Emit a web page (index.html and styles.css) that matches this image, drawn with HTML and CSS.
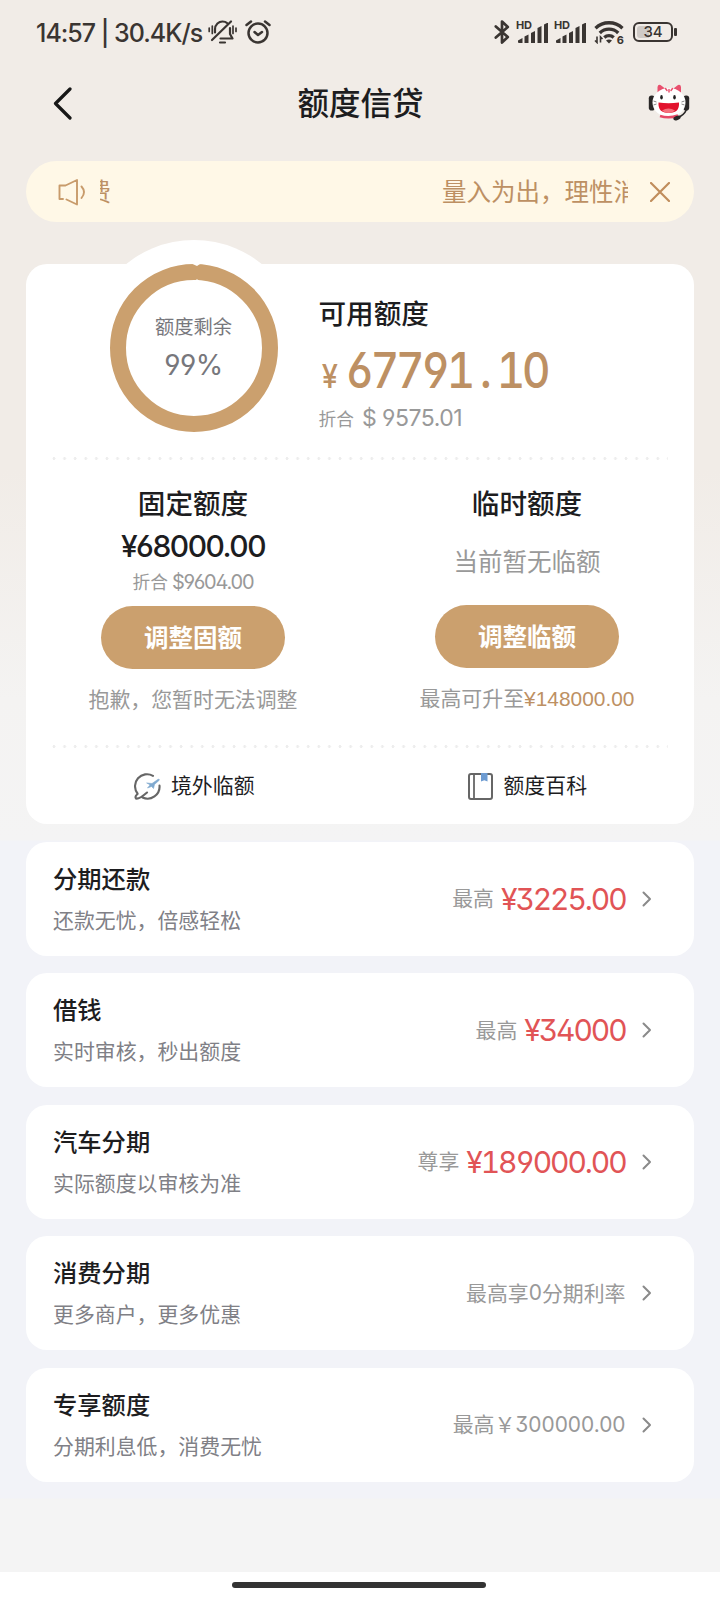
FILE: index.html
```html
<!DOCTYPE html>
<html lang="zh-CN">
<head>
<meta charset="utf-8">
<title>额度信贷</title>
<link rel="stylesheet" href="styles.css">
</head>
<body>
<div class="screen">
  <header class="status">
    <span class="status-time">14:57 | 30.4K/s</span>
    <svg class="ic-mute" width="29" height="26" viewBox="0 0 29 26" fill="none" stroke="#3a3532" stroke-width="2.200" stroke-linecap="round" stroke-linejoin="round">
      <path d="M7 13.500V10.500C7 5 11 2.500 14.500 2.500q3 0 4.500 1.500M22 9v6l2.500 4.500H12.500M4 21L23 2.500M12 23.500h5"/>
      <path d="M1.200 9v3.500M4.300 7v7.500M25 7v7.500M28 9v3.500" stroke-width="1.700"/>
    </svg>
    <svg class="ic-alarm" width="26" height="26" viewBox="0 0 26 26" fill="none" stroke="#3a3532" stroke-width="2.500" stroke-linecap="round" stroke-linejoin="round">
      <circle cx="13" cy="14" r="9.500"/><path d="M9.500 13l3.500 3 4-3M1.500 6L6 2.500M20 2.500l4.500 3.500"/>
    </svg>
    <span class="grow"></span>
    <svg class="ic-bt" width="16" height="26" viewBox="0 0 16 26" fill="none" stroke="#3a3532" stroke-width="2.700" stroke-linejoin="round" stroke-linecap="round">
      <path d="M1.800 7.500L13.800 18 8 23.500V2.500L13.800 8 1.800 18.500"/>
    </svg>
    <span class="signal"><b>HD</b>
      <svg width="31" height="20" viewBox="0 0 31 20" fill="#3a3532"><path d="M0 17.500L4.500 15v5H1q-1 0-1-1z"/><path d="M6.500 13.500l4-2V20h-4z"/><path d="M13 10l4-2v12h-4z"/><path d="M19.500 5l4-2v17h-4z"/><path d="M26 1.500l4-2v20.500h-4z"/></svg>
    </span>
    <span class="signal"><b>HD</b>
      <svg width="31" height="20" viewBox="0 0 31 20" fill="#3a3532"><path d="M0 17.500L4.500 15v5H1q-1 0-1-1z"/><path d="M6.500 13.500l4-2V20h-4z"/><path d="M13 10l4-2v12h-4z"/><path d="M19.500 5l4-2v17h-4z"/><path d="M26 1.500l4-2v20.500h-4z"/></svg>
    </span>
    <span class="wifi">
      <svg width="30" height="24" viewBox="0 0 30 24" fill="none" stroke="#3a3532" stroke-width="3.300"><path d="M1.500 8.200a19.500 19.500 0 0 1 27 0M5.800 13a13 13 0 0 1 18.400 0M10.300 17.500a6.800 6.800 0 0 1 9.400 0" /><path d="M15 23.500l-3-3a5 5 0 0 1 6 0z" fill="#3a3532" stroke="none"/><path d="M3 16.500v6L1 20.500M6.500 22.500v-5.500l2 2" stroke-width="1.600"/></svg>
      <b>6</b>
    </span>
    <span class="battery"><i></i><b>34</b></span>
  </header>

  <nav class="nav">
    <svg width="20" height="34" viewBox="0 0 20 34" fill="none" stroke="#171717" stroke-width="3.200" stroke-linecap="round" stroke-linejoin="round"><path d="M17 3L2.500 17.500 17 32"/></svg>
    <h1>额度信贷</h1>
    <svg class="mascot" width="42" height="38" viewBox="0 0 42 38">
      <path d="M9.500 11L9.500 3q.5-3 3-2L17 4.500z" fill="#e9506e"/><path d="M33 11V3q-.5-3-3-2L25.500 4.500z" fill="#e9506e"/>
      <rect x=".8" y="11.500" width="6" height="15" rx="2.800" fill="#292727"/><rect x="35.200" y="11.500" width="6" height="15" rx="2.800" fill="#292727"/>
      <ellipse cx="21" cy="18.500" rx="16.500" ry="14.500" fill="#fff"/>
      <path d="M17.500 4.500l1.500 2M21 5.500v2.500M24.500 4.500l-1.500 2" stroke="#e9506e" stroke-width="1.500" stroke-linecap="round"/>
      <path d="M12 32q9 2.800 18-.5" fill="none" stroke="#e64966" stroke-width="2.400"/>
      <path d="M38.500 25.500q-2.500 6-9 8" fill="none" stroke="#292727" stroke-width="1.600"/><ellipse cx="29" cy="34" rx="3.800" ry="2" fill="#292727" transform="rotate(-20 29 34)"/>
      <path d="M5.500 17l3 1M5.500 21l3-1M36.500 17l-3 1M36.500 21l-3-1" stroke="#555" stroke-width=".7"/>
      <ellipse cx="13.500" cy="13.300" rx="1.300" ry="2.300" fill="#222"/><ellipse cx="26.500" cy="13.300" rx="1.300" ry="2.300" fill="#222"/>
      <path d="M10.500 18.500q10 1.500 20.500 0 .8 10.500-10.200 10.500T10.500 18.500z" fill="#e2122d"/><path d="M14 26.500q6.500-4 13 0-2.500 2.500-6.500 2.500T14 26.500z" fill="#f5707c"/>
    </svg>
  </nav>

  <section class="notice">
    <svg width="28" height="28" viewBox="0 0 28 28" fill="none" stroke="#c89b6b" stroke-width="1.900" stroke-linecap="round" stroke-linejoin="round"><path d="M5 21H1.500V7.500H7.500L19 2V26.500L8.500 21.500M23.500 8.500q5 5.500 0 11.500"/></svg>
    <div class="marquee"><span class="tail">费</span><span class="lead">量入为出，理性消费</span></div>
    <svg width="20" height="20" viewBox="0 0 20 20" fill="none" stroke="#c08d5c" stroke-width="2.200" stroke-linecap="round"><path d="M1 1l18 18M19 1L1 19"/></svg>
  </section>

  <main class="content">
    <section class="card quota">
      <div class="overview">
        <div class="halo">
          <div class="ring">
            <svg class="ring-arc" width="168" height="168" viewBox="0 0 168 168"><circle cx="84" cy="84" r="76" fill="none" stroke="#cba06e" stroke-width="16"/><path d="M82.500 0L87 2l3-2zM84 17l3-1.700 3 1.700z" fill="#fff"/></svg>
            <span class="ring-label">额度剩余</span><span class="ring-value num">99%</span>
          </div>
        </div>
        <div class="available">
          <h2>可用额度</h2>
          <p class="amount num"><small>¥</small><span>67791</span><i>.</i><span>10</span></p>
          <p class="usd">折合<span class="num">$ 9575.01</span></p>
        </div>
      </div>
      <div class="dots"></div>
      <div class="pair">
        <div class="col">
          <h2>固定额度</h2>
          <p class="fixed num">¥68000.00</p>
          <p class="fixed-usd">折合 <span class="num">$9604.00</span></p>
          <button>调整固额</button>
          <p class="hint">抱歉，您暂时无法调整</p>
        </div>
        <div class="col">
          <h2>临时额度</h2>
          <p class="none">当前暂无临额</p>
          <button>调整临额</button>
          <p class="hint">最高可升至<em>¥148000.00</em></p>
        </div>
      </div>
      <div class="dots"></div>
      <div class="links">
        <a><svg width="27" height="27" viewBox="0 0 27 27" fill="none" stroke="#666" stroke-width="2.100" stroke-linecap="round"><path d="M19 2.800A12 12 0 0 0 3.500 20.500M25.500 12.500a12 12 0 0 1-17 12M3.500 21q-3 2.500-1.500 4.500 3 1 11-6"/><path d="M13 10l5 .5 6.500-4.500 1 1-5 4.500-1 4-2-2-4 1.500 2.500-3z" fill="#7fa9cf" stroke="#7fa9cf" stroke-width=".6"/></svg><span>境外临额</span></a>
        <a><svg width="25" height="27" viewBox="0 0 25 27"><rect x="1" y="1" width="23" height="25" rx="2" fill="none" stroke="#666" stroke-width="2"/><path d="M6 1v25" stroke="#666" stroke-width="1.800"/><path d="M13 0h6.500v8.500l-3.200-1.200-3.300 1.200z" fill="#6d9bd1"/></svg><span>额度百科</span></a>
      </div>
    </section>

    <section class="card row">
      <div class="info"><h3>分期还款</h3><p>还款无忧，倍感轻松</p></div>
      <div class="value"><span class="label">最高</span><strong class="num">¥3225.00</strong></div>
      <svg class="chev" width="10" height="16" viewBox="0 0 10 16"><path d="M1.500 1.500L8 8l-6.500 6.500"/></svg>
    </section>
    <section class="card row">
      <div class="info"><h3>借钱</h3><p>实时审核，秒出额度</p></div>
      <div class="value"><span class="label">最高</span><strong class="num">¥34000</strong></div>
      <svg class="chev" width="10" height="16" viewBox="0 0 10 16"><path d="M1.500 1.500L8 8l-6.500 6.500"/></svg>
    </section>
    <section class="card row">
      <div class="info"><h3>汽车分期</h3><p>实际额度以审核为准</p></div>
      <div class="value"><span class="label">尊享</span><strong class="num">¥189000.00</strong></div>
      <svg class="chev" width="10" height="16" viewBox="0 0 10 16"><path d="M1.500 1.500L8 8l-6.500 6.500"/></svg>
    </section>
    <section class="card row">
      <div class="info"><h3>消费分期</h3><p>更多商户，更多优惠</p></div>
      <div class="value"><span class="label">最高享</span><span class="num">0</span><span class="label">分期利率</span></div>
      <svg class="chev" width="10" height="16" viewBox="0 0 10 16"><path d="M1.500 1.500L8 8l-6.500 6.500"/></svg>
    </section>
    <section class="card row">
      <div class="info"><h3>专享额度</h3><p>分期利息低，消费无忧</p></div>
      <div class="value"><span class="label">最高￥</span><span class="num">300000.00</span></div>
      <svg class="chev" width="10" height="16" viewBox="0 0 10 16"><path d="M1.500 1.500L8 8l-6.500 6.500"/></svg>
    </section>
  </main>
  <div class="spacer"></div>
  <footer class="gesture"><span></span></footer>
</div>
</body>
</html>
```
FILE: styles.css
```css
* { box-sizing: border-box; margin: 0; padding: 0; }
body { width: 720px; height: 1600px; overflow: hidden; font-family: "Noto Sans CJK SC", sans-serif; color: #1d1d1f; }
svg { display: block; flex: none; }
i, em { font-style: normal; }
.screen {
  height: 1600px; display: flex; flex-direction: column;
  background: linear-gradient(#f1ece7 0, #f1ece7 470px, #f4f3f2 700px, #f4f4f4 840px, #f2f3f8 841px, #f2f3f8 1498px, #f4f4f4 1499px);
}
.num { font-family: Inter, "Noto Sans CJK SC", sans-serif; font-feature-settings: "cv03", "cv04", "ss01"; }
.grow { flex: 1; }

.status { height: 64px; display: flex; align-items: center; padding: 0 43px 0 36px; color: #3a3532; font-family: Inter, sans-serif; }
.status-time { font-size: 25px; font-weight: 500; letter-spacing: -1px; width: 172px; white-space: nowrap; padding-top: 2px; }
.ic-alarm { margin-left: 8px; }
.signal { display: flex; position: relative; width: 31px; height: 26px; align-items: flex-end; padding-bottom: 2px; margin-left: 7px; }
.signal b { position: absolute; left: -2px; top: 1px; font-size: 11px; line-height: 11px; letter-spacing: -.3px; }
.ic-bt + .signal { margin-left: 8px; }
.wifi { position: relative; display: flex; margin-left: 7px; }
.wifi b { position: absolute; right: 0; bottom: -1px; font-size: 11px; line-height: 10px; background: #f1ece7; padding-left: 1px; }
.battery { position: relative; width: 40px; height: 20px; margin: 0 4px 0 9px; border: 2px solid #3a3532; border-radius: 6px; display: flex; justify-content: center; align-items: center; }
.battery i { position: absolute; left: 2px; top: 2px; width: 12px; height: 12px; border-radius: 3px 0 0 3px; background: #cfcac6; }
.battery b { position: relative; font-size: 15px; font-weight: 500; line-height: 16px; }
.battery::after { content: ""; position: absolute; right: -6px; top: 4px; width: 3px; height: 8px; border-radius: 1px; background: #3a3532; }

.nav { height: 97px; display: flex; align-items: center; justify-content: space-between; padding: 0 30px 19px 53px; }
.nav h1 { font-size: 31.500px; font-weight: 500; line-height: 40px; padding-bottom: 5px; }

.notice { height: 61px; margin: 0 26px; border-radius: 31px; background: #fff8e7; display: flex; align-items: center; padding: 0 23px 0 32px; color: #bd9063; }
.marquee { flex: none; width: 528px; margin: 0 22px 0 14px; display: flex; overflow: hidden; white-space: nowrap; font-size: 24.500px; line-height: 34px; padding-bottom: 1px; }
.tail { flex: none; width: 11px; overflow: hidden; direction: rtl; margin-right: 331px; }
.lead { flex: none; }

.content { padding: 42px 26px 0; display: flex; flex-direction: column; gap: 17.500px; }
.card { background: #fff; border-radius: 21px; }
.quota { height: 560px; }
h2 { font-size: 27.600px; line-height: 36px; font-weight: 500; }
.overview { height: 193px; display: flex; }
.halo { flex: none; width: 216px; height: 216px; margin: -24px 0 0 59.500px; border-radius: 50%; background: #fff; padding: 24px; }
.ring { position: relative; width: 168px; height: 168px; display: flex; flex-direction: column; align-items: center; padding-top: 48px; color: #77777c; }
.ring-arc { position: absolute; left: 0; top: 0; }
.ring-label { font-size: 19.300px; line-height: 28px; }
.ring-value { font-size: 28px; line-height: 36px; margin-top: 7px; letter-spacing: -.5px; }
.available { padding: 30px 0 0 17px; }
.amount { display: flex; align-items: baseline; height: 54px; line-height: 54px; margin-top: 13px; font-size: 50px; font-weight: 500; color: #bd9063; letter-spacing: -3.600px; transform: scaleX(.88); transform-origin: left; font-feature-settings: "cv03", "cv04", "ss01", "tnum"; }
.amount small { font-size: 33px; width: 30px; padding-left: 3px; font-feature-settings: normal; }
.amount i { width: 28px; text-align: center; font-feature-settings: normal; }
.usd { display: flex; align-items: center; height: 30px; margin-top: 5.500px; font-size: 17.700px; color: #999; }
.usd .num { font-size: 23px; margin-left: 8px; letter-spacing: -.5px; }
.dots { height: 3px; margin: 0 26px; background: radial-gradient(circle at 2px 1.5px, #ededed 1.200px, transparent 1.700px) 0 0 / 10.600px 3px repeat-x; }
.pair { height: 285px; display: flex; }
.col { flex: 1; display: flex; flex-direction: column; align-items: center; padding-top: 24px; }
.fixed { font-size: 30px; font-weight: 500; line-height: 36px; margin-top: 7.500px; letter-spacing: -1.500px; }
.fixed-usd { font-size: 17.700px; line-height: 26px; margin-top: 4px; color: #999; }
.fixed-usd .num { font-size: 20px; letter-spacing: -1.200px; }
.none { font-size: 24.500px; line-height: 36px; margin: 22.500px 0 15px; color: #999; }
button { border: 0; width: 184px; height: 63px; margin-top: 11.500px; padding-bottom: 2px; border-radius: 32px; background: #cba06e; color: #fff; font: 700 24.500px/60px "Noto Sans CJK SC", sans-serif; }
.none + button { margin-top: 11.500px; }
.hint { font-size: 20.900px; line-height: 30px; margin-top: 14px; color: #999; white-space: nowrap; }
.hint em { font-family: "Liberation Sans", sans-serif; color: #bd9063; }
.links { display: flex; height: 76px; align-items: center; padding-left: 2px; }
.links a { flex: 1; display: flex; align-items: center; justify-content: center; gap: 10px; font-size: 20.900px; line-height: 30px; }
.links a + a { padding-left: 1px; }
.links span { padding-bottom: 5px; }

.row { height: 114px; display: flex; align-items: center; padding: 0 42px 0 27px; }
.info { flex: 1; padding-bottom: 4px; }
.row h3 { font-size: 24.300px; font-weight: 500; line-height: 36px; }
.info p { font-size: 20.900px; line-height: 30px; margin-top: 8px; color: #808086; }
.value { display: flex; align-items: center; font-size: 20.900px; line-height: 36px; color: #999; margin-right: 16.500px; }
.label { padding-bottom: 3px; }
.value strong { font-size: 30px; font-weight: 400; color: #e15456; margin-left: 7px; letter-spacing: -2.100px; font-feature-settings: "cv03", "cv04", "ss01", "tnum"; }
.chev { fill: none; stroke: #8a8a8a; stroke-width: 2; stroke-linecap: round; stroke-linejoin: round; }

.spacer { flex: 1; }
.gesture { height: 28px; background: #fff; display: flex; justify-content: center; align-items: center; padding: 0 3px 2px 0; }
.gesture span { width: 254px; height: 6px; border-radius: 3px; background: #333; }
```
